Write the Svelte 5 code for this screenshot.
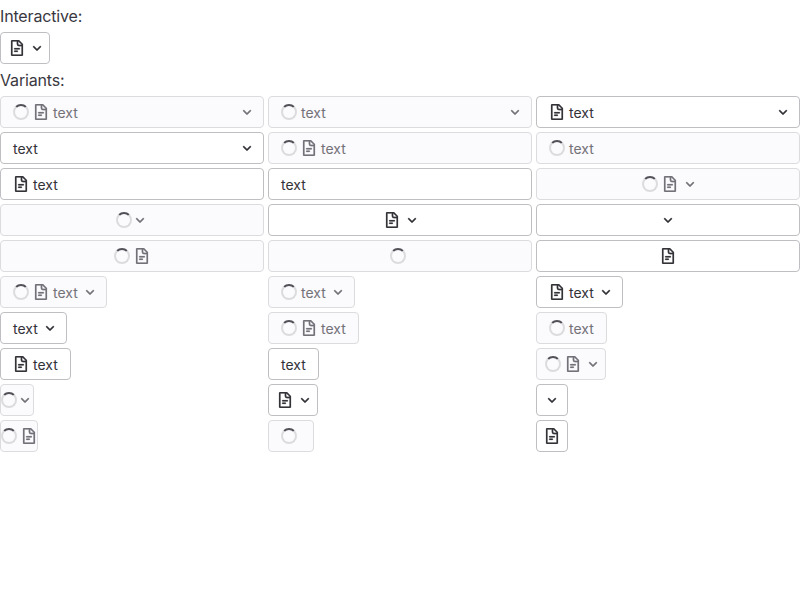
<script>
  // s = loading spinner, d = document icon, t = text, c = caret
  const combos = ['sdtc', 'stc', 'dtc', 'tc', 'sdt', 'st', 'dt', 't', 'sdc', 'sc', 'dc', 'c', 'sd', 's', 'd'];
  const rows = [
    ...combos.map((parts) => ({ parts, block: true })),
    ...combos.map((parts) => ({ parts, block: false }))
  ];

  function kind(parts) {
    if (parts.includes('t')) return parts.includes('c') ? 'labelled caret' : 'labelled';
    if (parts === 's') return 'labelled trailing';
    if (parts === 'sdc' || parts === 'dc') return 'icon-caret';
    if (parts === 'sc') return 'tight';
    if (parts === 'sd') return 'flush';
    return 'square';
  }
</script>

{#snippet toggle(parts, block)}
  <button type="button" class="toggle {kind(parts)}" class:block disabled={parts.includes('s')} aria-label="Toggle">
    {#if parts.includes('s')}
      <span class="spinner"></span>
    {/if}
    {#if parts.includes('d')}
      <svg class="icon" viewBox="0 0 16 16">
        <path fill-rule="evenodd" clip-rule="evenodd" d="M3.5 1.5v13h9V6.25H10A2.25 2.25 0 0 1 7.75 4V1.5H3.5zm5.75 0V4c0 .41.34.75.75.75h2.5v-.13L9.38 1.5h-.13zM2 1a1 1 0 0 1 1-1h6.59a1 1 0 0 1 .7.3l3.42 3.4a1 1 0 0 1 .29.71V15a1 1 0 0 1-1 1H3a1 1 0 0 1-1-1V1zm3 7.75A.75.75 0 0 1 5.75 8h4.5a.75.75 0 0 1 0 1.5h-4.5A.75.75 0 0 1 5 8.75zm0 2.5a.75.75 0 0 1 .75-.75h2.5a.75.75 0 0 1 0 1.5h-2.5a.75.75 0 0 1-.75-.75z" />
      </svg>
    {/if}
    {#if parts.includes('t')}
      <span class="text">text</span>
    {/if}
    {#if parts.includes('c')}
      <svg class="icon chevron" viewBox="0 0 16 16">
        <path d="M4.22 6.22a.75.75 0 0 1 1.06 0L8 8.94l2.72-2.72a.75.75 0 1 1 1.06 1.06l-3.25 3.25a.75.75 0 0 1-1.06 0L4.22 7.28a.75.75 0 0 1 0-1.06z" />
      </svg>
    {/if}
  </button>
{/snippet}

<main>
  <div class="heading">Interactive:</div>
  {@render toggle('dc', false)}
  <div class="heading">Variants:</div>
  <div class="grid">
    {#each rows as row}
      {@render toggle(row.parts, row.block)}
    {/each}
  </div>
</main>

<style>
  main {
    display: flex;
    flex-direction: column;
    align-items: flex-start;
    gap: 4px;
    padding-top: 4px;
    font-family: Inter, 'Noto Sans', sans-serif;
    font-size: 16px;
    line-height: 24px;
    color: #3a383f;
  }
  .heading {
    height: 24px;
    letter-spacing: -0.16px;
  }
  .grid {
    display: grid;
    grid-template-columns: repeat(3, 1fr);
    gap: 4px;
    width: 100%;
    justify-items: start;
  }
  .toggle {
    box-sizing: border-box;
    display: inline-flex;
    align-items: center;
    justify-content: center;
    gap: 4px;
    height: 32px;
    margin: 0;
    padding: 0 8px;
    border: 1px solid #bfbfc3;
    border-radius: 4px;
    background: #fff;
    color: #333238;
    font-family: inherit;
    font-size: 14px;
    line-height: 16px;
  }
  .toggle:disabled {
    background: #fbfafd;
    border-color: #dcdcde;
    color: #737278;
  }
  .block {
    width: 100%;
  }
  .labelled {
    padding: 0 12px;
  }
  .labelled.block {
    justify-content: flex-start;
  }
  .labelled.caret {
    padding-right: 8px;
  }
  .caret .chevron {
    margin-left: auto;
  }
  .trailing.block {
    justify-content: center;
  }
  .trailing .spinner {
    margin-right: 4px;
  }
  .icon-caret {
    padding-right: 4px;
  }
  .tight {
    padding: 0;
    gap: 0;
  }
  .flush {
    padding: 0;
  }
  .square {
    padding: 0 7px;
  }
  .icon {
    display: block;
    flex: none;
    width: 16px;
    height: 16px;
    fill: currentColor;
    stroke: currentColor;
    stroke-width: 0.2;
  }
  .chevron {
    stroke-width: 0.3;
  }
  .text {
    padding-top: 2px;
    white-space: nowrap;
  }
  .spinner {
    box-sizing: border-box;
    flex: none;
    width: 16px;
    height: 16px;
    border: 2px solid #dcdcde;
    border-top-color: #535158;
    border-radius: 50%;
  }
</style>
